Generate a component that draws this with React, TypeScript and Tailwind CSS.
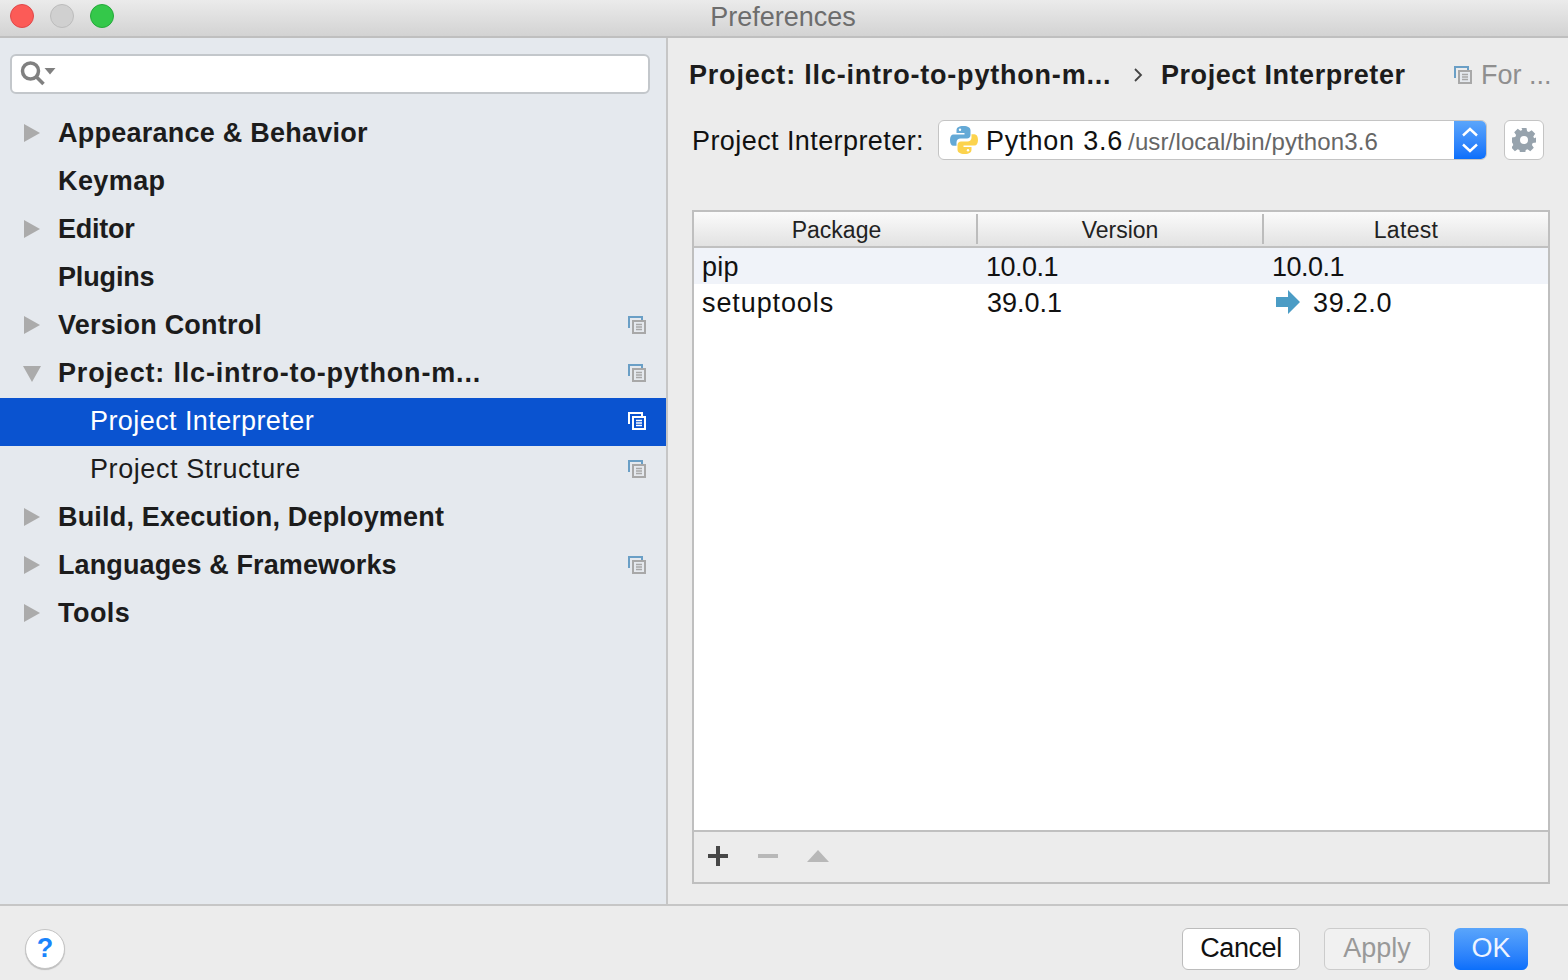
import React from "react";

const font = { fontFamily: '"Liberation Sans", Arial, sans-serif' };

function CopyIcon({ selected = false }: { selected?: boolean }) {
  const back = selected ? "#ffffff" : "#6a9fc6";
  const front = selected ? "#ffffff" : "#a8a8a8";
  const fill = selected ? "#0a53d0" : "#e5e9ee";
  return (
    <svg width="18" height="18" viewBox="0 0 18 18" className="block">
      <path d="M1 12V1h13v3" fill="none" stroke={back} strokeWidth="2" />
      <rect x="5" y="5" width="12" height="12" fill={fill} stroke={front} strokeWidth="2" />
      <path d="M8 8.500h6M8 11h6M8 13.500h6" stroke={front} strokeWidth="1.400" />
    </svg>
  );
}

function Arrow({ open = false }: { open?: boolean }) {
  return (
    <svg width="18" height="18" viewBox="0 0 18 18" className="block">
      {open ? <path d="M0 2h18L9 18z" fill="#ababab" /> : <path d="M1 0l16 9-16 9z" fill="#ababab" />}
    </svg>
  );
}

type Row = {
  label: string;
  arrow?: "closed" | "open";
  copy?: boolean;
  sub?: boolean;
  selected?: boolean;
  tracking: string;
};

const rows: Row[] = [
  { label: "Appearance & Behavior", arrow: "closed", tracking: "tracking-[0.25px]" },
  { label: "Keymap", tracking: "tracking-[0.4px]" },
  { label: "Editor", arrow: "closed", tracking: "tracking-[-0.25px]" },
  { label: "Plugins", tracking: "tracking-[-0.15px]" },
  { label: "Version Control", arrow: "closed", copy: true, tracking: "tracking-[0.2px]" },
  { label: "Project: llc-intro-to-python-m...", arrow: "open", copy: true, tracking: "tracking-[0.82px]" },
  { label: "Project Interpreter", sub: true, copy: true, selected: true, tracking: "tracking-[0.42px]" },
  { label: "Project Structure", sub: true, copy: true, tracking: "tracking-[0.58px]" },
  { label: "Build, Execution, Deployment", arrow: "closed", tracking: "tracking-[0.18px]" },
  { label: "Languages & Frameworks", arrow: "closed", copy: true, tracking: "tracking-[0.12px]" },
  { label: "Tools", arrow: "closed", tracking: "tracking-[0.45px]" },
];

function SidebarRow({ row }: { row: Row }) {
  return (
    <div className={`flex h-12 items-center pb-[2px] ${row.selected ? "bg-[#0a53d0] text-white" : "text-[#1c1c1c]"}`}>
      <div className="w-[58px] shrink-0 pl-[23px]">{row.arrow && <Arrow open={row.arrow === "open"} />}</div>
      <div className={`flex-1 whitespace-nowrap text-[27px] ${row.sub ? "pl-8" : "font-bold"} ${row.tracking}`}>
        {row.label}
      </div>
      {row.copy && (
        <div className="mr-5 shrink-0">
          <CopyIcon selected={row.selected} />
        </div>
      )}
    </div>
  );
}

function PyLogo() {
  return (
    <svg width="28" height="28" viewBox="0 0 28 28" className="block">
      <path
        d="M13.500 0C8.500 0 6.500 1.600 6.500 4.500V7h8v1.500H3.500C1.300 8.500 0 10.500 0 14c0 3.600 1.300 5.800 3.500 5.800h3v-3.300c0-2.500 1.800-4 4-4h6.500c2 0 3.500-1.500 3.500-3.500v-4.500C20.500 1.600 18 0 13.500 0z"
        fill="#64a9d6"
      />
      <circle cx="10" cy="3.800" r="1.200" fill="#fff" />
      <path
        d="M14.500 28c5 0 7-1.600 7-4.500V21h-8v-1.500h11c2.200 0 3.500-2 3.500-5.500 0-3.600-1.300-5.800-3.500-5.800h-3v3.300c0 2.500-1.800 4-4 4H11c-2 0-3.500 1.500-3.500 3.500v4.500C7.500 26.400 10 28 14.500 28z"
        fill="#fcd34d"
      />
      <circle cx="18" cy="24.200" r="1.200" fill="#fff" />
    </svg>
  );
}

function Gear() {
  return (
    <svg width="24" height="24" viewBox="0 0 24 24" className="block">
      <path
        fill="#97a3ad"
        fillRule="evenodd"
        d="M9.500 0h5l.6 3.300 1.800.8 2.800-1.900 3.500 3.500-1.900 2.800.8 1.800L24 9.500v5l-3.300.6-.8 1.800 1.900 2.800-3.500 3.500-2.800-1.900-1.800.8-.6 3.400h-5l-.6-3.400-1.800-.8-2.800 1.900-3.500-3.500 1.900-2.800-.8-1.800L0 14.500v-5l3.300-.6.8-1.800-1.900-2.800 3.500-3.500 2.800 1.900 1.800-.8zM12 8a4 4 0 1 0 0 8 4 4 0 0 0 0-8z"
      />
    </svg>
  );
}

function HeaderCell({ label, className }: { label: string; className: string }) {
  return (
    <div className={`flex items-center justify-center pt-[2px] text-[23px] text-[#222] ${className}`}>{label}</div>
  );
}

export default function App() {
  return (
    <div style={font} className="flex h-[980px] w-[1568px] flex-col overflow-hidden bg-[#ececec]">
      {/* Title bar */}
      <div className="relative flex h-[38px] shrink-0 items-center border-b-2 border-[#bfbfbf] bg-gradient-to-b from-[#ebebeb] to-[#d3d3d3] pb-[4px] pl-[10px]">
        <div className="flex gap-4">
          <div className="h-6 w-6 rounded-full border border-[#e0484a] bg-[#fc5b57]" />
          <div className="h-6 w-6 rounded-full border border-[#bcbcbc] bg-[#d0d0d0]" />
          <div className="h-6 w-6 rounded-full border border-[#25a93a] bg-[#34c84a]" />
        </div>
        <div className="absolute left-0 top-0 flex h-[35px] w-[1566px] items-center justify-center text-[27px] text-[#6d6d6d]">
          Preferences
        </div>
      </div>

      <div className="flex min-h-0 flex-1">
        {/* Sidebar */}
        <div className="flex w-[668px] shrink-0 flex-col border-r-2 border-[#c6c6c6] bg-[#e5e9ee]">
          <div className="px-[10px] pt-4">
            <div className="flex h-10 w-[640px] items-center rounded-[6px] border-2 border-[#c3c7cb] bg-white pl-[8px]">
              <svg width="36" height="26" viewBox="0 0 36 26" className="block">
                <circle cx="10.500" cy="10" r="8" fill="none" stroke="#808080" strokeWidth="3.500" />
                <path d="M16 15.500l7.500 7.500" stroke="#808080" strokeWidth="3.500" />
                <path d="M24.500 7h11l-5.500 6.500z" fill="#808080" />
              </svg>
            </div>
          </div>
          <div className="pt-4">
            {rows.map((r) => (
              <SidebarRow key={r.label} row={r} />
            ))}
          </div>
        </div>

        {/* Main */}
        <div className="flex min-w-0 flex-1 flex-col pl-[20px]">
          <div className="flex h-[74px] items-center whitespace-nowrap text-[#1c1c1c]">
            <span className="w-[440px] shrink-0 pl-[1px] text-[27px] font-bold tracking-[0.8px]">
              Project: llc-intro-to-python-m...
            </span>
            <svg width="10" height="16" viewBox="0 0 10 16" className="ml-[5px] block">
              <path d="M2 2l6 6-6 6" fill="none" stroke="#444" strokeWidth="1.800" />
            </svg>
            <span className="ml-[17px] w-[294px] shrink-0 pl-[1px] text-[27px] font-bold tracking-[0.55px]">
              Project Interpreter
            </span>
            <CopyIcon />
            <span className="ml-[9px] text-[27px] text-[#8f8f8f]">For ...</span>
          </div>

          <div className="mt-2 flex h-10 shrink-0 items-center pl-1">
            <span className="w-[246px] shrink-0 whitespace-nowrap pt-[2px] text-[27px] leading-[36px] tracking-[0.42px] text-[#111]">
              Project Interpreter:
            </span>
            <div className="flex h-10 w-[549px] items-center overflow-hidden rounded-[6px] border border-[#c4c4c4] bg-white">
              <div className="ml-[11px] shrink-0">
                <PyLogo />
              </div>
              <span className="ml-[8px] whitespace-nowrap pt-[2px] text-[27px] leading-[34px] tracking-[0.8px] text-[#111]">
                Python 3.6
              </span>
              <span className="ml-[5px] flex-1 whitespace-nowrap pt-[4px] text-[24px] leading-[32px] tracking-[0.13px] text-[#666]">
                /usr/local/bin/python3.6
              </span>
              <div className="flex h-full w-[32px] shrink-0 items-center justify-center bg-gradient-to-b from-[#5aa5fb] to-[#0a6ffb]">
                <svg width="18" height="28" viewBox="0 0 18 28" className="block">
                  <path d="M2 9.500l7-6.500 7 6.500M2 18.500l7 6.500 7-6.500" fill="none" stroke="#fff" strokeWidth="2.400" />
                </svg>
              </div>
            </div>
            <div className="ml-[17px] flex h-10 w-10 items-center justify-center rounded-[6px] border border-[#c4c4c4] bg-white">
              <Gear />
            </div>
          </div>

          <div className="mb-5 ml-1 mr-[18px] mt-[50px] flex min-h-0 flex-1 flex-col border-2 border-[#bfbfbf] bg-white">
            <div className="flex h-[36px] shrink-0 border-b-2 border-[#c0c0c0] bg-gradient-to-b from-[#fbfbfb] to-[#e2e2e2]">
              <HeaderCell label="Package" className="w-[282px] shrink-0 pl-[3px]" />
              <div className="my-[2px] w-[2px] shrink-0 bg-[#bcbcbc]" />
              <HeaderCell label="Version" className="w-[284px] shrink-0" />
              <div className="my-[2px] w-[2px] shrink-0 bg-[#bcbcbc]" />
              <HeaderCell label="Latest" className="flex-1 tracking-[0.3px]" />
            </div>
            <div className="flex-1 text-[27px] text-[#111]">
              <div className="flex h-[36px] items-center bg-[#f0f3f9] pt-[2px]">
                <span className="w-[284px] shrink-0 pl-2 tracking-[0.3px]">pip</span>
                <span className="w-[286px] shrink-0 pl-[8px] tracking-[-0.5px]">10.0.1</span>
                <span className="pl-2 tracking-[-0.5px]">10.0.1</span>
              </div>
              <div className="flex h-[36px] items-center pt-[2px]">
                <span className="w-[284px] shrink-0 pl-2 tracking-[0.9px]">setuptools</span>
                <span className="w-[286px] shrink-0 pl-[9px]">39.0.1</span>
                <svg width="24" height="24" viewBox="0 0 24 24" className="-mt-[2px] ml-[12px] block shrink-0">
                  <path d="M0 7h12V0l12 12-12 12v-7H0z" fill="#4b9cc5" />
                </svg>
                <span className="pl-[13px] tracking-[0.7px]">39.2.0</span>
              </div>
            </div>
            <div className="flex h-[52px] shrink-0 items-center border-t-2 border-[#c0c0c0] bg-[#ececec] pb-[2px] pl-[14px]">
              <svg width="20" height="20" viewBox="0 0 20 20" className="block">
                <path d="M8 0h4v8h8v4h-8v8H8v-8H0V8h8z" fill="#474747" />
              </svg>
              <svg width="20" height="20" viewBox="0 0 20 20" className="ml-[30px] block">
                <path d="M0 8h20v4H0z" fill="#b8b8b8" />
              </svg>
              <svg width="22" height="14" viewBox="0 0 22 14" className="ml-[29px] block">
                <path d="M11 1l11 12H0z" fill="#b8b8b8" />
              </svg>
            </div>
          </div>
        </div>
      </div>

      {/* Footer */}
      <div className="flex h-[76px] shrink-0 items-center border-t-2 border-[#c6c6c6] pl-[25px] pr-[40px] pt-[11px]">
        <div className="flex h-10 w-10 items-center justify-center rounded-full border border-[#c4c4c4] bg-white text-[27px] font-bold text-[#1a84fb] shadow-[0_1px_1px_rgba(0,0,0,0.2)]">
          ?
        </div>
        <div className="ml-auto flex items-center">
          <button className="flex h-[42px] w-[118px] items-center justify-center rounded-[6px] border border-[#bcbcbc] bg-white text-[27px] tracking-[-0.4px] text-[#111]">
            Cancel
          </button>
          <button className="ml-6 flex h-[42px] w-[106px] items-center justify-center rounded-[6px] border border-[#cccccc] bg-[#f1f1f1] text-[27px] text-[#999]">
            Apply
          </button>
          <button className="ml-6 flex h-[42px] w-[74px] items-center justify-center rounded-[6px] bg-gradient-to-b from-[#5aa5fb] to-[#0a6ffb] text-[27px] text-[#eef4ff]">
            OK
          </button>
        </div>
      </div>
    </div>
  );
}
